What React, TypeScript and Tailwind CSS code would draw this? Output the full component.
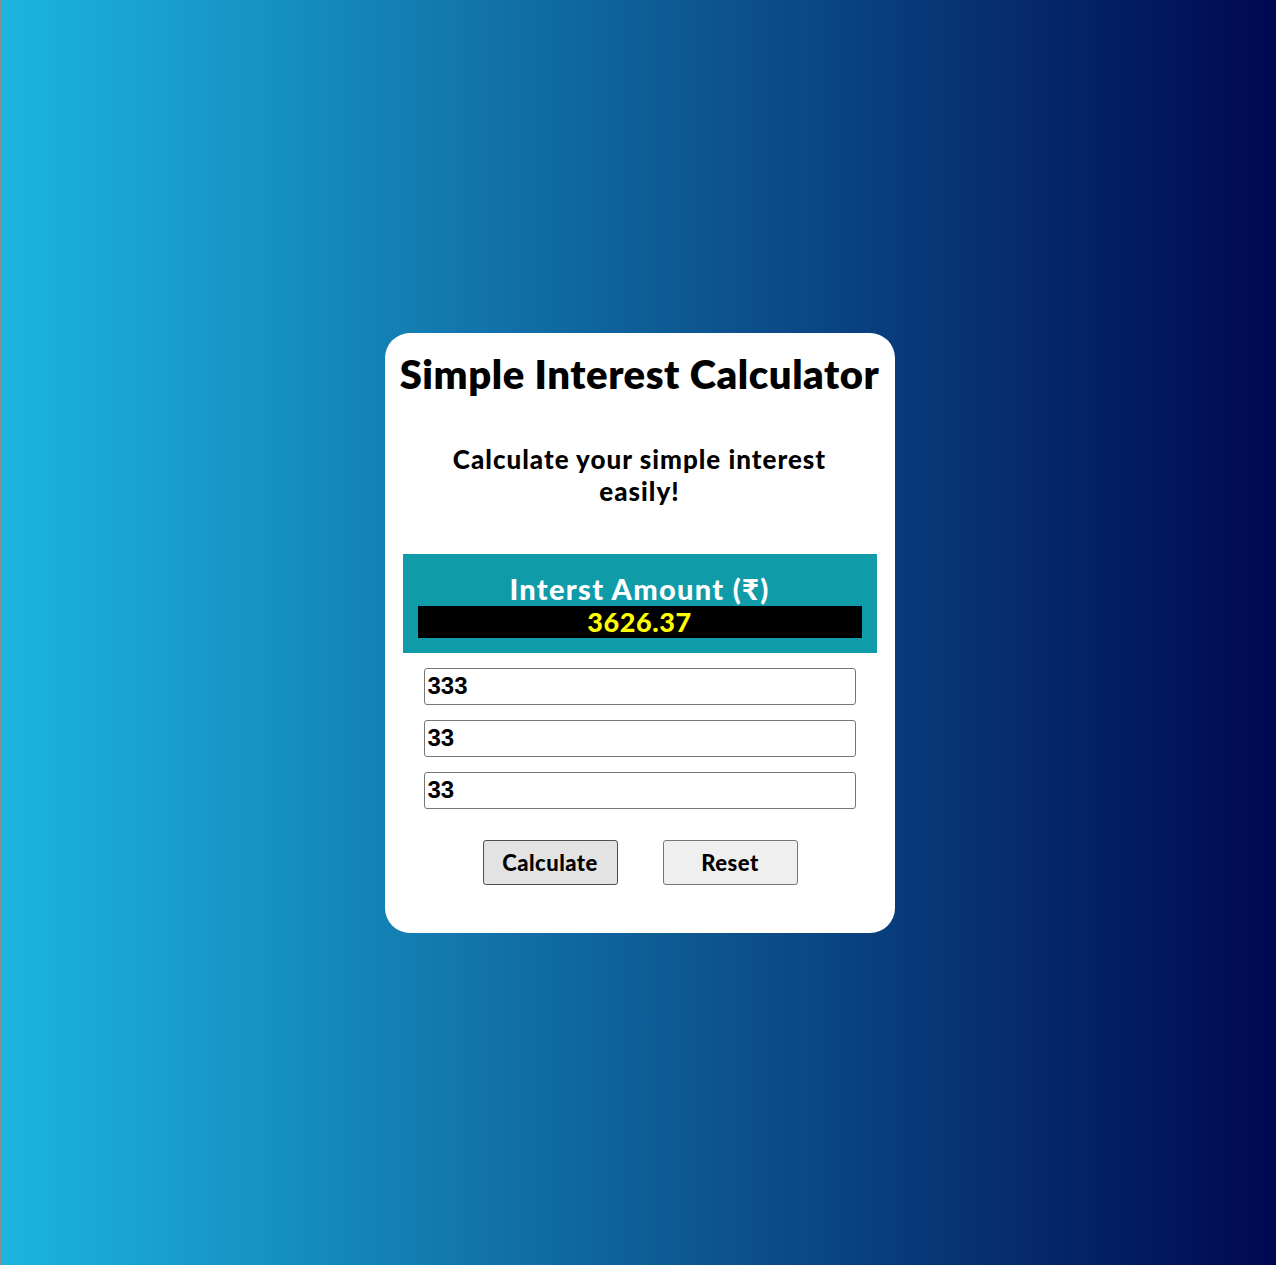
import { useState } from 'react';

export default function App() {
  const [principal, setPrincipal] = useState('333');
  const [rate, setRate] = useState('33');
  const [time, setTime] = useState('33');
  const [interest, setInterest] = useState('3626.37');

  const calculate = () => {
    const si = (Number(principal) * Number(rate) * Number(time)) / 100;
    setInterest(si.toFixed(2));
  };

  const reset = () => {
    setPrincipal('');
    setRate('');
    setTime('');
    setInterest('0');
  };

  const inputCls =
    "block w-[432px] h-[37px] mx-auto border border-[#767676] rounded-[3px] bg-white px-[3px] text-[24px] font-bold text-black outline-none font-['Liberation_Sans',Arial,sans-serif]";

  return (
    <div className="min-h-[1265px] w-full flex items-center justify-center pl-[2px] border-l border-[#8a8a8a] bg-[linear-gradient(to_right,#1cb5e0,#000851)] font-['Lato','Noto_Sans',sans-serif]">
      <div className="w-[510px] h-[600px] bg-white rounded-[25px] pt-[17px] pb-[48px] px-[18px] flex flex-col">
        {/* Heading */}
        <h1 className="-mx-[18px] shrink-0 whitespace-nowrap text-center text-[40px] leading-[48px] font-extrabold text-black tracking-[0.55px]">
          Simple Interest Calculator
        </h1>
        <p className="mt-[45px] shrink-0 mx-auto w-[430px] text-center text-[26px] leading-[32px] font-black text-black tracking-[1px]">
          Calculate your simple interest easily!
        </p>

        {/* Result box */}
        <div className="mt-[47px] shrink-0 h-[99px] bg-[#0f9ba8] px-[15px] pt-[17px]">
          <div className="text-center text-white text-[29px] leading-[35px] font-black tracking-[1.3px]">
            Interst Amount (₹)
          </div>
          <div className="h-[32px] bg-black text-center text-[#ffff00] text-[27px] leading-[32px] font-black tracking-[0.6px]">
            {interest}
          </div>
        </div>

        {/* Inputs */}
        <div className="mt-[15px] shrink-0 flex flex-col gap-[15px]">
          <input className={inputCls} value={principal} onChange={(e) => setPrincipal(e.target.value)} />
          <input className={inputCls} value={rate} onChange={(e) => setRate(e.target.value)} />
          <input className={inputCls} value={time} onChange={(e) => setTime(e.target.value)} />
        </div>

        {/* Buttons */}
        <div className="mt-[31px] shrink-0 flex justify-start pl-[80px] gap-[45px]">
          <button
            onClick={calculate}
            className="w-[135px] h-[45px] bg-[#e3e3e3] border border-[#4f4f4f] rounded-[3px] text-[22px] font-black text-black tracking-[0.5px]"
          >
            Calculate
          </button>
          <button
            onClick={reset}
            className="w-[135px] h-[45px] bg-[#efefef] border border-[#767676] rounded-[3px] text-[22px] font-black text-black tracking-[0.5px]"
          >
            Reset
          </button>
        </div>
      </div>
    </div>
  );
}
